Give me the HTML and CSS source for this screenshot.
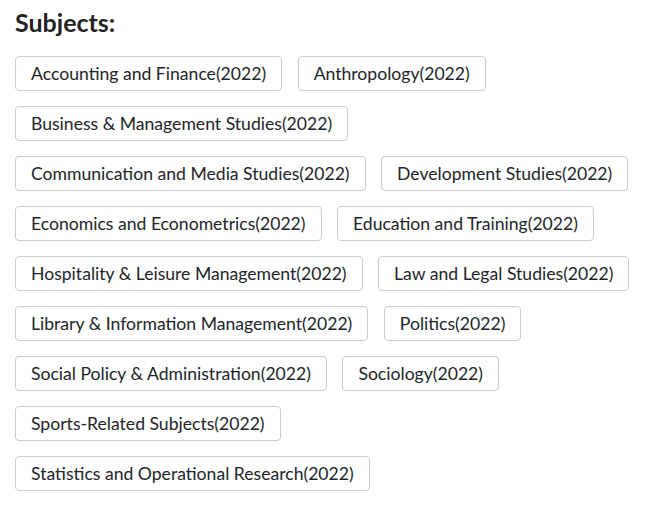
FILE: index.html
```html
<!DOCTYPE html>
<html lang="en">
<head>
    <meta charset="UTF-8">
    <meta name="viewport" content="width=device-width, initial-scale=1.0">
    <title>Subjects</title>
    <link rel="stylesheet" href="styles.css">
</head>
<body>
    <div class="container">
        <h2>Subjects:</h2>

        <!-- Subject tags -->
        <div class="subject-list">
            <span class="subject">Accounting and Finance(2022)</span>
            <span class="subject">Anthropology(2022)</span>
            <span class="subject">Business &amp; Management Studies(2022)</span>
            <span class="subject">Communication and Media Studies(2022)</span>
            <span class="subject">Development Studies(2022)</span>
            <span class="subject">Economics and Econometrics(2022)</span>
            <span class="subject">Education and Training(2022)</span>
            <span class="subject">Hospitality &amp; Leisure Management(2022)</span>
            <span class="subject">Law and Legal Studies(2022)</span>
            <span class="subject">Library &amp; Information Management(2022)</span>
            <span class="subject">Politics(2022)</span>
            <span class="subject">Social Policy &amp; Administration(2022)</span>
            <span class="subject">Sociology(2022)</span>
            <span class="subject">Sports-Related Subjects(2022)</span>
            <span class="subject">Statistics and Operational Research(2022)</span>
        </div>
    </div>
</body>
</html>
```

FILE: styles.css
```css
body {
    font-family: Lato, "Open Sans", sans-serif;
    margin: 0;
    padding: 0;
    background-color: #fff;
    color: #212529;
}

.container {
    width: 630px;
    padding: 7px 15px;
}

h2 {
    font-size: 25px;
    font-weight: bold;
    margin: 0 0 18px 0;
    line-height: 31px;
    color: #222;
}

.subject-list {
    display: flex;
    flex-wrap: wrap;
    gap: 15px 15.5px;
}

.subject {
    font-size: 17.6px;
    line-height: 23px;
    padding: 5px 15px;
    border: 1px solid #ccc;
    border-radius: 4px;
    background-color: #fff;
}
```
